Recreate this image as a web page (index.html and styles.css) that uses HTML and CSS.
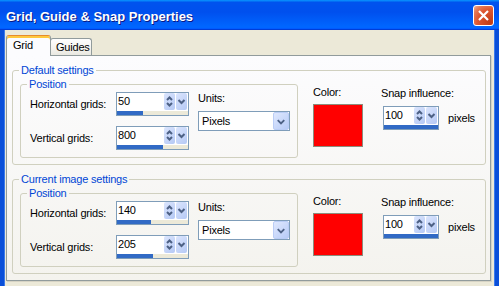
FILE: index.html
```html
<!DOCTYPE html>
<html lang="en">
  <head>
    <meta charset="UTF-8" />
    <title>Grid, Guide &amp; Snap Properties</title>
    <link rel="stylesheet" href="styles.css">
  </head>
  <body>
    <div class="window">
      <div class="titlebar">
        <span class="title">Grid, Guide &amp; Snap Properties</span>
        <span class="close">
          <svg viewBox="0 0 19 19" width="19" height="19"><path d="M5 5l9 9M14 5l-9 9" /></svg>
        </span>
      </div>

      <div class="client">
        <div class="tabs">
          <div class="tab active">Grid</div>
          <div class="tab">Guides</div>
        </div>

        <div class="panel">
          <fieldset class="group outer">
            <legend>Default settings</legend>
            <div class="group-row">
              <fieldset class="group inner">
                <legend>Position</legend>
                <div class="pos-grid">
                  <div class="label">Horizontal grids:</div>
                  <div class="spin">
                    <div class="spin-top">
                      <span class="spin-value">50</span>
                      <span class="spin-btn"><svg viewBox="0 0 11 17" width="11" height="17"><path d="M3 7l2.5-2.5L8 7M3 10l2.5 2.5L8 10" /></svg></span>
                      <span class="spin-btn"><svg viewBox="0 0 11 17" width="11" height="17"><path d="M2.5 7l3 3 3-3" /></svg></span>
                    </div>
                    <div class="spin-bar"><div class="spin-fill" style="width:26px"></div></div>
                  </div>
                  <div class="units">
                    <div class="units-label">Units:</div>
                    <div class="select">
                      <span>Pixels</span>
                      <span class="select-btn"><svg viewBox="0 0 15 17" width="15" height="17"><path d="M4 7l3.5 3.5L11 7" /></svg></span>
                    </div>
                  </div>
                  <div class="label">Vertical grids:</div>
                  <div class="spin">
                    <div class="spin-top">
                      <span class="spin-value">800</span>
                      <span class="spin-btn"><svg viewBox="0 0 11 17" width="11" height="17"><path d="M3 7l2.5-2.5L8 7M3 10l2.5 2.5L8 10" /></svg></span>
                      <span class="spin-btn"><svg viewBox="0 0 11 17" width="11" height="17"><path d="M2.5 7l3 3 3-3" /></svg></span>
                    </div>
                    <div class="spin-bar"><div class="spin-fill" style="width:46px"></div></div>
                  </div>
                </div>
              </fieldset>

              <div class="color-col">
                <div>Color:</div>
                <div class="swatch"></div>
              </div>

              <div class="snap-col">
                <div>Snap influence:</div>
                <div class="snap-row">
                  <div class="spin small">
                    <div class="spin-top">
                      <span class="spin-value">100</span>
                      <span class="spin-btn"><svg viewBox="0 0 11 17" width="11" height="17"><path d="M3 7l2.5-2.5L8 7M3 10l2.5 2.5L8 10" /></svg></span>
                      <span class="spin-btn"><svg viewBox="0 0 11 17" width="11" height="17"><path d="M2.5 7l3 3 3-3" /></svg></span>
                    </div>
                    <div class="spin-bar"><div class="spin-fill" style="width:100%"></div></div>
                  </div>
                  <span>pixels</span>
                </div>
              </div>
            </div>
          </fieldset>

          <fieldset class="group outer second">
            <legend>Current image settings</legend>
            <div class="group-row">
              <fieldset class="group inner">
                <legend>Position</legend>
                <div class="pos-grid">
                  <div class="label">Horizontal grids:</div>
                  <div class="spin">
                    <div class="spin-top">
                      <span class="spin-value">140</span>
                      <span class="spin-btn"><svg viewBox="0 0 11 17" width="11" height="17"><path d="M3 7l2.5-2.5L8 7M3 10l2.5 2.5L8 10" /></svg></span>
                      <span class="spin-btn"><svg viewBox="0 0 11 17" width="11" height="17"><path d="M2.5 7l3 3 3-3" /></svg></span>
                    </div>
                    <div class="spin-bar"><div class="spin-fill" style="width:34px"></div></div>
                  </div>
                  <div class="units">
                    <div class="units-label">Units:</div>
                    <div class="select">
                      <span>Pixels</span>
                      <span class="select-btn"><svg viewBox="0 0 15 17" width="15" height="17"><path d="M4 7l3.5 3.5L11 7" /></svg></span>
                    </div>
                  </div>
                  <div class="label">Vertical grids:</div>
                  <div class="spin">
                    <div class="spin-top">
                      <span class="spin-value">205</span>
                      <span class="spin-btn"><svg viewBox="0 0 11 17" width="11" height="17"><path d="M3 7l2.5-2.5L8 7M3 10l2.5 2.5L8 10" /></svg></span>
                      <span class="spin-btn"><svg viewBox="0 0 11 17" width="11" height="17"><path d="M2.5 7l3 3 3-3" /></svg></span>
                    </div>
                    <div class="spin-bar"><div class="spin-fill" style="width:36px"></div></div>
                  </div>
                </div>
              </fieldset>

              <div class="color-col">
                <div>Color:</div>
                <div class="swatch"></div>
              </div>

              <div class="snap-col">
                <div>Snap influence:</div>
                <div class="snap-row">
                  <div class="spin small">
                    <div class="spin-top">
                      <span class="spin-value">100</span>
                      <span class="spin-btn"><svg viewBox="0 0 11 17" width="11" height="17"><path d="M3 7l2.5-2.5L8 7M3 10l2.5 2.5L8 10" /></svg></span>
                      <span class="spin-btn"><svg viewBox="0 0 11 17" width="11" height="17"><path d="M2.5 7l3 3 3-3" /></svg></span>
                    </div>
                    <div class="spin-bar"><div class="spin-fill" style="width:100%"></div></div>
                  </div>
                  <span>pixels</span>
                </div>
              </div>
            </div>
          </fieldset>
        </div>
      </div>
    </div>
  </body>
</html>
```

FILE: styles.css
```css
* {
  box-sizing: border-box;
}
body {
  margin: 0;
  background: #ece9d8;
  font-family: "Liberation Sans", Arial, sans-serif;
  font-size: 11px;
  line-height: 13px;
  letter-spacing: -0.2px;
  color: #000;
}
.window {
  width: 499px;
  height: 286px;
  display: flex;
  flex-direction: column;
  overflow: hidden;
}

/* title bar */
.titlebar {
  height: 30px;
  flex: none;
  display: flex;
  justify-content: space-between;
  align-items: flex-start;
  padding: 0 5px 0 6px;
  background: linear-gradient(180deg, #0997ff, #0053ee 8%, #0050ee 40%, #0066ff 88%, #0066ff 93%, #005bff 95%, #003dd7 96%, #003dd7);
}
.title {
  margin-top: 9px;
  color: #fff;
  font-size: 13px;
  font-weight: bold;
  line-height: 16px;
  letter-spacing: 0;
  text-shadow: 1px 1px 0 #0a1883;
}
.close {
  width: 21px;
  height: 21px;
  margin-top: 5px;
  border: 1px solid #fff;
  border-radius: 3px;
  background: radial-gradient(circle at 85% 85%, #c23c14 0%, #dd5630 55%, #e57a57 80%, #f2b29a 100%);
  display: flex;
  align-items: center;
  justify-content: center;
}
.close svg path {
  stroke: #fff;
  stroke-width: 2.2;
  fill: none;
}

/* window body */
.client {
  flex: 1;
  border-left: 4px solid #0a4fd9;
  border-right: 4px solid #0a4fd9;
  box-shadow: inset 1px 0 0 #3d7bea, inset -1px 0 0 #3d7bea;
  padding: 5px 4px 0 2px;
}
.tabs {
  display: flex;
  align-items: flex-start;
  height: 20px;
  position: relative;
  z-index: 1;
}
.tab {
  height: 17px;
  margin-top: 3px;
  margin-left: -1px;
  padding: 1px 5px 0 5px;
  width: 42px;
  line-height: 14px;
  border: 1px solid #919b9c;
  border-bottom: none;
  border-radius: 3px 3px 0 0;
  background: linear-gradient(#fefefe, #f4f3ee 60%, #e9e8e1);
}
.tab.active {
  height: 21px;
  margin-top: 0;
  margin-left: 0;
  width: 45px;
  padding: 2px 6px 0 6px;
  border-top-color: #e68b2c;
  background: #fcfcfe;
  box-shadow: inset 0 2px 0 #ffc83c;
  z-index: 2;
}
.panel {
  border: 1px solid #919b9c;
  background: linear-gradient(#fcfcfe, #f4f3ee);
  box-shadow: 1px 1px 0 #d6d3c4;
  padding: 8px 4px 6px 5px;
}

/* group boxes */
.group {
  margin: 0;
  min-width: 0;
  border: 1px solid #d0d0bf;
  border-radius: 3px;
}
.group legend {
  padding: 0 2px;
  color: #0046d5;
  line-height: 13px;
}
.outer {
  padding: 1px 4px 6px 7px;
}
.outer legend {
  margin-left: -1px;
}
.outer.second {
  margin-top: 8px;
}
.inner {
  width: 278px;
  flex: none;
  padding: 1px 7px 7px 9px;
}
.inner legend {
  margin-left: -3px;
}
.group-row {
  display: flex;
}

/* position grid */
.pos-grid {
  display: grid;
  grid-template-columns: 86px 73px 101px;
  grid-template-rows: 24px 24px;
  row-gap: 10px;
}
.label {
  align-self: center;
}
.units {
  grid-column: 3;
  grid-row: 1 / span 2;
  padding-left: 9px;
}
.units-label {
  margin-bottom: 6px;
}
.select {
  height: 20px;
  border: 1px solid #7f9db9;
  background: #fff;
  display: flex;
  justify-content: space-between;
  align-items: center;
  padding-left: 3px;
}
.select-btn {
  width: 16px;
  height: 18px;
  border: 1px solid #bacdf6;
  border-radius: 2px;
  background: linear-gradient(135deg, #dfe8fe, #b7cbf7);
  display: flex;
}
.select-btn svg path,
.spin-btn svg path {
  stroke: #4d6185;
  stroke-width: 2;
  fill: none;
}

/* spin boxes */
.spin {
  width: 73px;
  height: 24px;
  border: 1px solid #7f9db9;
  background: #fff;
}
.spin.small {
  width: 56px;
}
.spin-top {
  height: 18px;
  display: flex;
  gap: 1px;
  padding-right: 1px;
}
.spin-value {
  flex: 1;
  margin-top: 2px;
  padding-left: 1px;
}
.spin-btn {
  width: 11px;
  height: 17px;
  border-radius: 2px;
  background: linear-gradient(135deg, #dbe5fd, #b5c9f5);
  display: flex;
}
.spin-bar {
  height: 4px;
  background: #ece9d8;
}
.spin-fill {
  height: 4px;
  background: #316ac5;
}

/* color + snap */
.color-col {
  margin-left: 15px;
  padding-top: 8px;
}
.swatch {
  width: 50px;
  height: 43px;
  margin-top: 5px;
  background: #ff0000;
  border: 1px solid #8c8c7c;
}
.snap-col {
  margin-left: 18px;
  padding-top: 9px;
}
.snap-row {
  display: flex;
  align-items: center;
  gap: 9px;
  margin-top: 6px;
  padding-left: 2px;
}
```
